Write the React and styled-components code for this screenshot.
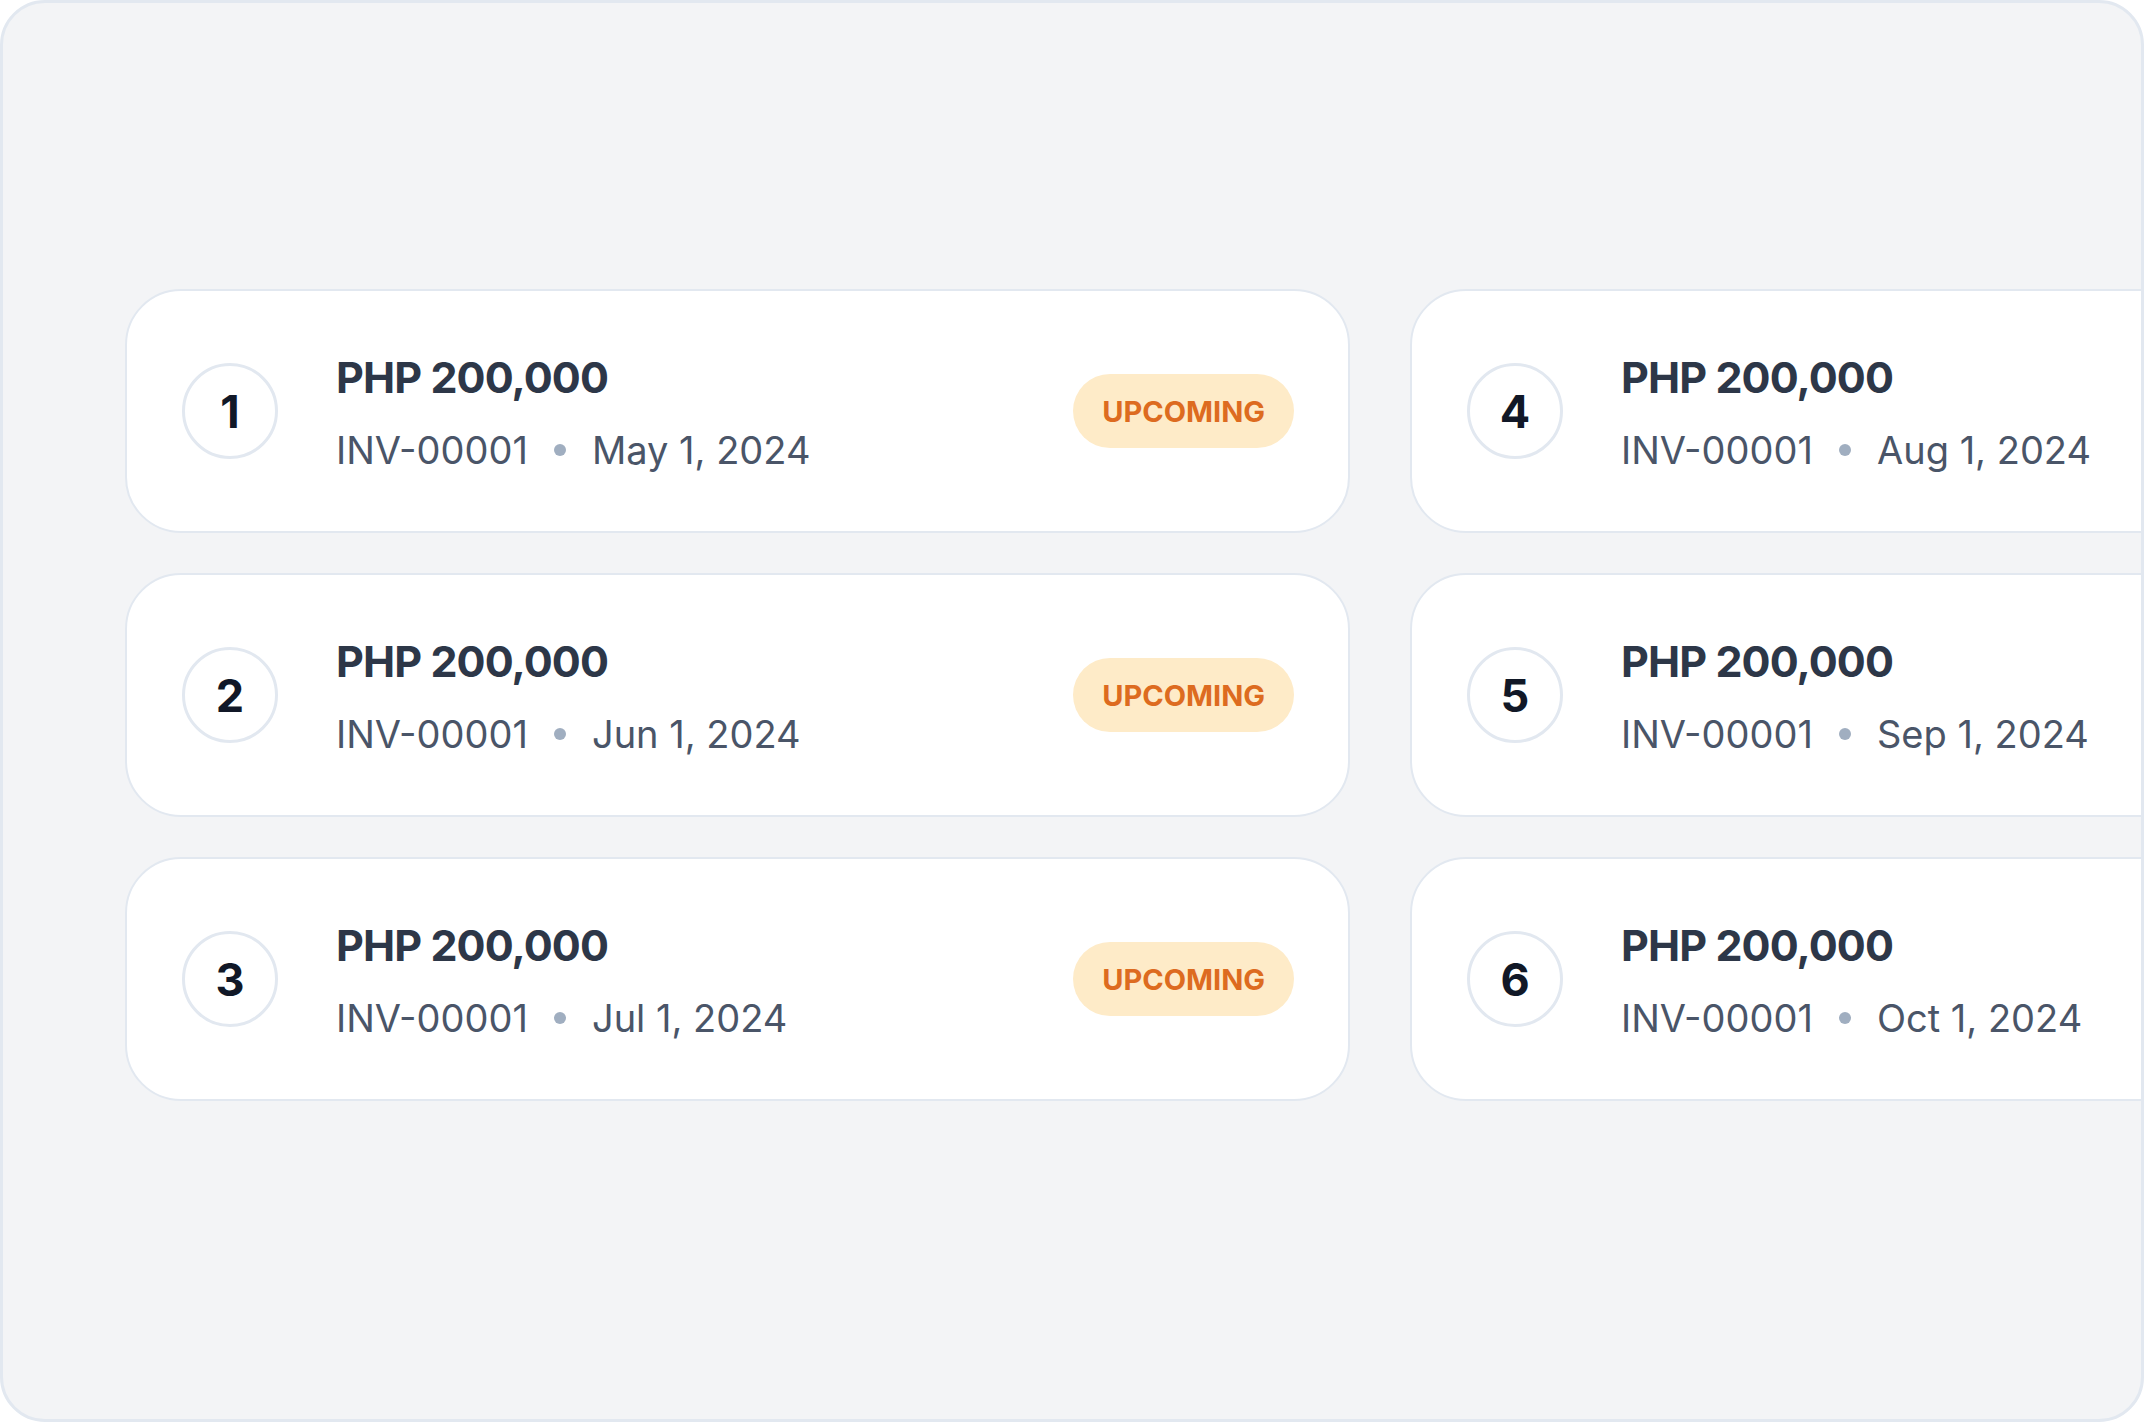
import React from 'react';
import styled, { createGlobalStyle } from 'styled-components';

const GlobalStyle = createGlobalStyle`
  html, body {
    margin: 0;
    padding: 0;
    background: #ffffff;
  }
  body {
    font-family: Inter, "Noto Sans", "Liberation Sans", sans-serif;
  }
`;

const Frame = styled.div`
  box-sizing: border-box;
  width: 2144px;
  height: 1422px;
  background-color: #f3f4f6;
  border: 3px solid #e2e8f0;
  border-radius: 45px;
  overflow: hidden;
  padding: 286px 0 0 122px;
`;

const Schedule = styled.div`
  display: grid;
  grid-auto-flow: column;
  grid-template-rows: repeat(3, 244px);
  grid-template-columns: repeat(2, 1225px);
  column-gap: 60px;
  row-gap: 40px;
`;

const Card = styled.div`
  box-sizing: border-box;
  display: flex;
  align-items: center;
  background: #ffffff;
  border: 2px solid #e2e8f0;
  border-radius: 56px;
  padding: 0 54px 0 55px;
`;

const StepCircle = styled.div`
  box-sizing: border-box;
  flex: none;
  width: 96px;
  height: 96px;
  border-radius: 50%;
  border: 3px solid #e2e8f0;
  display: flex;
  align-items: center;
  justify-content: center;
  font-size: 45px;
  font-weight: 700;
  color: #111827;
`;

const Info = styled.div`
  flex: 1;
  margin-left: 58px;
  display: flex;
  flex-direction: column;
`;

const Amount = styled.div`
  font-size: 43px;
  font-weight: 700;
  line-height: 52px;
  color: #2d3748;
  letter-spacing: -0.9px;
`;

const Meta = styled.div`
  display: flex;
  align-items: center;
  gap: 26px;
  margin-top: 25px;
  font-size: 38px;
  line-height: 44px;
  font-weight: 400;
  color: #4a5568;
`;

const Dot = styled.span`
  width: 12px;
  height: 12px;
  border-radius: 50%;
  background: #a0aec0;
`;

const Badge = styled.div`
  flex: none;
  height: 74px;
  padding: 0 29px;
  border-radius: 37px;
  background: #feebc8;
  color: #dd6b20;
  font-size: 29px;
  font-weight: 700;
  display: flex;
  align-items: center;
`;

const payments = [
  { n: 1, date: 'May 1, 2024' },
  { n: 2, date: 'Jun 1, 2024' },
  { n: 3, date: 'Jul 1, 2024' },
  { n: 4, date: 'Aug 1, 2024' },
  { n: 5, date: 'Sep 1, 2024' },
  { n: 6, date: 'Oct 1, 2024' },
];

export default function App() {
  return (
    <>
      <GlobalStyle />
      <Frame>
        <Schedule>
          {payments.map((p) => (
            <Card key={p.n}>
              <StepCircle>{p.n}</StepCircle>
              <Info>
                <Amount>PHP 200,000</Amount>
                <Meta>
                  <span>INV-00001</span>
                  <Dot />
                  <span>{p.date}</span>
                </Meta>
              </Info>
              <Badge>UPCOMING</Badge>
            </Card>
          ))}
        </Schedule>
      </Frame>
    </>
  );
}
